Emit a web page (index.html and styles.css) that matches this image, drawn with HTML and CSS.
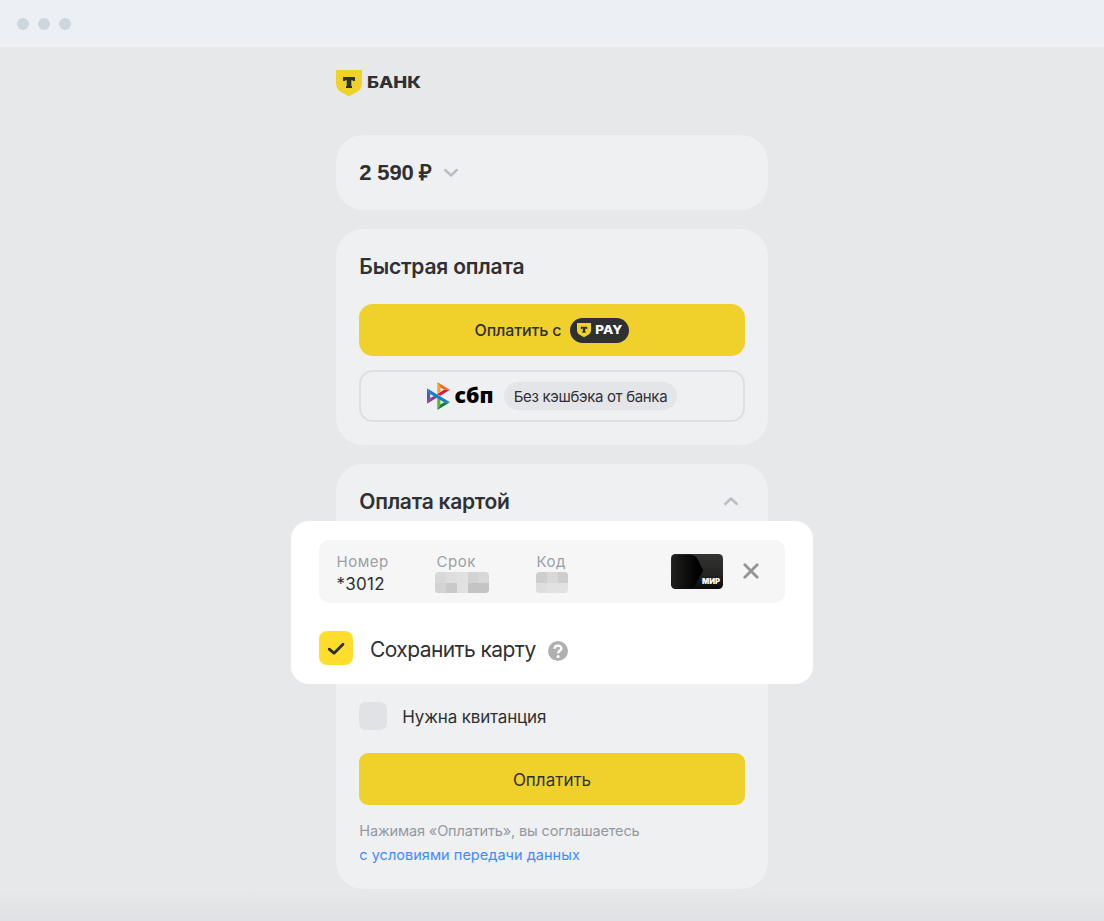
FILE: index.html
```html
<!DOCTYPE html>
<html lang="ru">
<head>
<meta charset="utf-8">
<title>Т-Банк — оплата</title>
<link rel="stylesheet" href="styles.css">
</head>
<body>
<header class="chrome"><i class="dot"></i><i class="dot"></i><i class="dot"></i></header>
<main class="page">
  <div class="brand">
    <svg class="brand-shield" viewBox="0 0 26 26"><path d="M0 0H26V13.5C26 17.5 24 20 21 22L13 26.3L5 22C2 20 0 17.5 0 13.5Z" fill="#f0d12b"/><path d="M7 7H19V11H17L16.6 10.2H15.3V16H16V18H10V16H10.7V10.2H9.4L9 11H7Z" fill="#2f3033"/></svg>
    <svg class="brand-name" viewBox="0 0 54 16"><text class="wide" x="0" y="13.5" font-size="15.3" textLength="54" lengthAdjust="spacingAndGlyphs">БАНК</text></svg>
  </div>

  <section class="card amount-card">
    <span class="amount">2 590 ₽</span>
    <svg class="chevron" viewBox="0 0 16 10"><path d="M2.2 2L8 7.5L13.8 2"/></svg>
  </section>

  <section class="card quick-card">
    <h2 class="title quick-title">Быстрая оплата</h2>
    <div class="button tpay">
      <span class="tpay-label">Оплатить с</span>
      <span class="tpay-badge">
        <svg class="tpay-shield" viewBox="0 0 26 26"><path d="M0 0H26V13.5C26 17.5 24 20 21 22L13 26.3L5 22C2 20 0 17.5 0 13.5Z" fill="#f0d12b"/><path d="M7 7H19V11H17L16.6 10.2H15.3V16H16V18H10V16H10.7V10.2H9.4L9 11H7Z" fill="#2f3033"/></svg>
        <svg class="tpay-name" viewBox="0 0 28 12"><text class="wide" x="0.3" y="10.2" font-size="11.6" textLength="27" lengthAdjust="spacingAndGlyphs">PAY</text></svg>
      </span>
    </div>
    <div class="button sbp">
      <svg class="sbp-mark" viewBox="0 0 23 28">
        <path d="M0 6.3L3.2 12V16.2L0 21.8Z" fill="#5b57a2"/>
        <path d="M0 21.8L3.2 16.2L6.6 14L10.3 15.5Z" fill="#8e3e91"/>
        <path d="M10.3 0L13.4 5.6V9.4L10.3 13.5Z" fill="#f7a51d"/>
        <path d="M10.3 0L23 7.8H17L13.4 5.6Z" fill="#e9762b"/>
        <path d="M23 7.8L13.2 13.8L10.3 12.2L17 7.8Z" fill="#dc1548"/>
        <path d="M10.3 13.5L13.4 17.8V22.4L10.3 28Z" fill="#63b32e"/>
        <path d="M23 20.2L10.3 28L13.4 22.4L17 20.2Z" fill="#168039"/>
        <path d="M0 6.3L23 20.2H17L3.2 12Z" fill="#1482c8"/>
      </svg>
      <svg class="sbp-name" viewBox="0 0 40 30"><text class="sbp-text" x="-.5" y="21.7" font-size="20.5" textLength="39" lengthAdjust="spacingAndGlyphs">сбп</text></svg>
      <span class="sbp-chip">Без кэшбэка от банка</span>
    </div>
  </section>

  <section class="card pay-card">
    <div class="pay-head">
      <h2 class="title pay-title">Оплата картой</h2>
      <svg class="chevron chevron-up" viewBox="0 0 16 10"><path d="M2.2 2L8 7.5L13.8 2"/></svg>
    </div>
    <div class="panel">
      <div class="fields">
        <div class="field number"><span class="label label-number">Номер</span><span class="value">*3012</span></div>
        <div class="field term"><span class="label label-term">Срок</span>
          <svg class="mask" width="54" height="21" viewBox="0 0 54 21" shape-rendering="crispEdges"><rect width="54" height="21" fill="#d8d8d8"/><path d="M11 0H22V11H11Z" fill="#dedede"/><path d="M22 0H33V21H22Z" fill="#e1e1e1"/><path d="M33 0H43V11H33Z" fill="#d2d2d2"/><path d="M0 11H11V21H0Z" fill="#d3d3d3"/><path d="M11 11H22V21H11Z" fill="#c9c9c9"/><path d="M33 11H54V21H33Z" fill="#c4c4c4"/></svg>
        </div>
        <div class="field code"><span class="label label-code">Код</span>
          <svg class="mask" width="32" height="21" viewBox="0 0 32 21" shape-rendering="crispEdges"><rect width="32" height="21" fill="#e2e2e2"/><path d="M0 0H11V11H0Z" fill="#cecece"/><path d="M11 0H22V11H11Z" fill="#d8d8d8"/><path d="M22 0H32V11H22Z" fill="#cdcdcd"/><path d="M0 11H11V21H0Z" fill="#dedede"/></svg>
        </div>
        <svg class="bank-card" viewBox="0 0 52 35">
          <defs>
            <linearGradient id="cardBase" x1="0" y1="0" x2="0" y2="1"><stop offset="0" stop-color="#343433"/><stop offset=".6" stop-color="#242423"/><stop offset="1" stop-color="#090909"/></linearGradient>
            <linearGradient id="cardFace"><stop offset="0" stop-color="#20201f"/><stop offset=".75" stop-color="#030303"/><stop offset="1" stop-color="#000"/></linearGradient>
          </defs>
          <rect width="52" height="35" rx="4.5" fill="url(#cardBase)"/>
          <path d="M4.5 .6H17C22 .6 25 2 27 6L32.3 16.5L27 26C25 31 23 34.4 18 34.4H4.5Q.6 34.4 .6 30V5Q.6 .6 4.5 .6Z" fill="url(#cardFace)"/>
          <text class="mir" x="31" y="29.8" font-size="7.4" textLength="18" lengthAdjust="spacingAndGlyphs">МИР</text>
        </svg>
        <svg class="close" viewBox="0 0 16 16"><path d="M1.8 1.8L14.2 14.2M14.2 1.8L1.8 14.2"/></svg>
      </div>
      <div class="save">
        <span class="check"><svg viewBox="0 0 34 34"><path d="M10.2 18.2L15 22.2L24 13.3"/></svg></span>
        <span class="save-label">Сохранить карту</span>
        <svg class="help" viewBox="0 0 20 20"><circle cx="10" cy="10" r="10" fill="#b0b0b0"/><path d="M6.6 7.8C6.6 3.6 13.4 3.7 13.4 7.6C13.4 9.9 10.1 9.7 10.1 12.2" fill="none" stroke="#fff" stroke-width="2.4"/><circle cx="10.1" cy="15.5" r="1.5" fill="#fff"/></svg>
      </div>
    </div>
    <div class="receipt"><i class="box"></i><span class="receipt-label">Нужна квитанция</span></div>
    <div class="button pay"><span class="pay-label">Оплатить</span></div>
    <p class="legal"><span class="legal-text">Нажимая «Оплатить», вы соглашаетесь</span><br><a class="legal-link">с условиями передачи данных</a></p>
  </section>
</main>
</body>
</html>
```
FILE: styles.css
```css
* { box-sizing: border-box; }
body { margin: 0; height: 921px; overflow: hidden; font-family: Inter, "Liberation Sans", sans-serif; color: #2f3033; background: linear-gradient(#e7e8ea 890px, #e0e1e4 921px); }
svg { display: block; flex: none; }
.chrome { height: 47px; display: flex; gap: 9px; padding: 18px 0 0 17px; background: #ecf0f5; border-bottom: 3px solid #eff1f3; }
.dot { width: 12px; height: 12px; border-radius: 50%; background: #ced6de; }
.page { width: 432px; margin: 0 auto; padding-top: 23px; }
.brand { display: flex; align-items: center; height: 26px; gap: 5px; margin-bottom: 39px; }
.brand-shield { width: 26px; height: 26px; overflow: visible; }
.brand-name { width: 54px; height: 16px; margin-top: -2px; overflow: visible; }
.wide { font-family: Inter, sans-serif; font-weight: 800; fill: #2f3033; }
.card { background: #eff0f2; border-radius: 27px; padding: 0 23.3px; }
.amount-card { height: 75px; display: flex; align-items: center; margin-bottom: 19px; }
.amount { width: 84px; margin-top: -4px; font-family: "Liberation Sans", sans-serif; font-size: 22px; font-weight: 700; white-space: nowrap; word-spacing: -.5px; }
.chevron { width: 16px; height: 10px; fill: none; stroke: #bcbec6; stroke-width: 2.5; stroke-linecap: round; stroke-linejoin: round; }
.chevron-up { transform: rotate(180deg); margin: -2px 6px 0 0; }
.title { margin: 0; font-size: 21px; line-height: 26px; font-weight: 600; white-space: nowrap; }
.quick-card { height: 216px; padding-top: 25px; margin-bottom: 19px; }
.quick-title { letter-spacing: -.2px; margin-bottom: 24px; }
.button { height: 52px; border-radius: 14px; display: flex; align-items: center; justify-content: center; }
.tpay { background: #f0d12b; gap: 9px; margin-bottom: 14px; }
.tpay-label { font-size: 16px; font-weight: 500; letter-spacing: -.15px; }
.tpay-badge { width: 59px; height: 25px; border-radius: 13px; background: #2f3033; display: flex; align-items: center; gap: 4px; padding-left: 7px; }
.tpay-shield { width: 14px; height: 14px; overflow: visible; }
.tpay-name { width: 28px; height: 12px; }
.tpay-name .wide { fill: #fff; }
.sbp { border: 2px solid #dddfe2; }
.sbp-mark { width: 23px; height: 28px; }
.sbp-name { width: 40px; height: 30px; margin-left: 5px; overflow: visible; }
.sbp-text { font-family: "Noto Sans", sans-serif; font-weight: 900; }
.sbp-chip { height: 28px; line-height: 29px; padding: 0 10px; margin-left: 9px; border-radius: 14px; background: #e4e5e9; font-size: 15px; letter-spacing: -.33px; white-space: nowrap; }
.pay-card { height: 425px; }
.pay-head { height: 57px; padding-top: 18px; display: flex; align-items: center; justify-content: space-between; }
.pay-title { letter-spacing: -.25px; }
.panel { height: 163px; margin: 0 -68.3px; padding: 19px 28px; border-radius: 18px; background: #fff; }
.fields { height: 63px; border-radius: 10px; background: #f6f6f6; display: flex; padding-left: 17.5px; }
.field { padding-top: 11px; display: flex; flex-direction: column; align-items: flex-start; }
.number { width: 98px; }
.term { width: 101px; }
.code { width: 135px; }
.label { font-size: 15px; line-height: 21px; color: #9aa0a8; letter-spacing: .5px; }
.label-term { padding-left: 2px; }
.label-code { padding-left: 1px; }
.value { font-size: 17px; line-height: 24px; letter-spacing: .25px; }
.mask { border-radius: 4px; }
.bank-card { width: 52px; height: 35px; margin-top: 14px; }
.mir { font-family: Inter, sans-serif; font-weight: 900; fill: #fff; }
.close { width: 16px; height: 16px; margin: 23px 0 0 20px; fill: none; stroke: #949494; stroke-width: 2.8; stroke-linecap: round; }
.save { display: flex; align-items: center; margin-top: 28px; height: 35px; }
.check { width: 34px; height: 34px; margin: -1px 17px 0 0; border-radius: 8px; background: #ffdd2d; }
.check path { fill: none; stroke: #2f3033; stroke-width: 2.8; stroke-linecap: round; stroke-linejoin: round; }
.save-label { font-size: 21px; margin-top: 2px; white-space: nowrap; letter-spacing: -.58px; }
.help { width: 20px; height: 20px; margin: 4px 0 0 12px; }
.receipt { display: flex; align-items: center; height: 29px; margin-top: 17px; gap: 15px; }
.box { width: 28px; height: 28px; border-radius: 7px; background: #e1e2e6; }
.receipt-label { font-size: 17px; margin-top: 2px; white-space: nowrap; letter-spacing: -.17px; }
.pay { margin-top: 23px; background: #f0d12b; border-radius: 9px; }
.pay-label { font-size: 17px; padding-top: 2px; }
.legal { margin: 14px 0 0; font-size: 14.5px; line-height: 24px; color: #9299a2; white-space: nowrap; }
.legal-text { letter-spacing: -.14px; }
.legal-link { color: #428bf9; letter-spacing: .03px; }
```
